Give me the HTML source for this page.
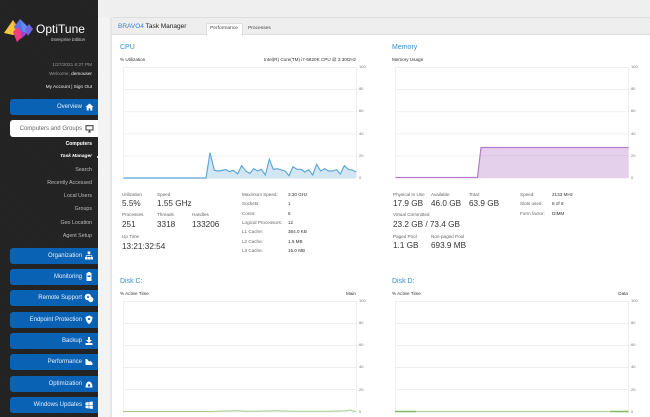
<!DOCTYPE html>
<html><head><meta charset="utf-8"><style>
html,body{margin:0;padding:0}
body{width:650px;height:417px;overflow:hidden;position:relative;background:#f3f3f3;font-family:"Liberation Sans",sans-serif}
#w{position:absolute;left:0;top:0;width:650px;height:417px;overflow:hidden;filter:blur(.3px)}
.t{position:absolute;white-space:nowrap;line-height:10px;height:10px}
.s{font-size:4.6px;color:#666}
.k{font-size:4.6px;color:#333}
.v{font-size:8.2px;color:#333}
.h{font-size:7px;color:#3a8fc9}
.m{font-size:5.3px;color:#ddd;right:558px;text-align:right}
.i{font-size:4.7px;color:#ddd;right:558px;text-align:right}
.b{position:absolute;left:10px;width:88px;height:16px;background:#0a62b5;border-radius:3px 0 0 3px}
.bt{position:absolute;right:568px;color:#e8f0fa;font-size:6px;line-height:10px;white-space:nowrap;text-align:right}
.y{font-size:4px;color:#777;position:absolute;line-height:6px}
</style></head><body><div id="w">
<div style="position:absolute;left:0;top:0;width:98px;height:417px;background-color:#212121;background-image:repeating-linear-gradient(45deg,rgba(255,255,255,.025) 0 1px,transparent 1px 2px)"></div>
<div style="position:absolute;left:98px;top:0;width:552px;height:17px;background:#efefef"></div>
<div style="position:absolute;left:110px;top:17px;width:2px;height:400px;background:#e6e6e6"></div>
<div style="position:absolute;left:112px;top:17px;width:538px;height:400px;background:#fff"></div>
<div style="position:absolute;left:112px;top:17px;width:538px;height:18px;background:#eeeeee;border-top:1px solid #ddd;box-sizing:border-box;border-radius:2px 0 0 0;border-bottom:1px solid #ddd"></div>
<div style="position:absolute;left:206px;top:23px;width:37px;height:13px;background:#fff;border:1px solid #ddd;border-bottom:none;box-sizing:border-box;border-radius:2px 2px 0 0"></div>

<svg style="position:absolute;left:0;top:0" width="650" height="417" viewBox="0 0 650 417">
<g>
<polygon points="4,33 13,20 21,33 13,35" fill="#f7c63c"/>
<polygon points="13,20 18,27 21,34 15,36" fill="#f9a13a"/>
<polygon points="14,27 20,19 26,33 21,37" fill="#5a6fe8"/>
<polygon points="20,19 24,23 31,30 27,33 24,36" fill="#5b8df0"/>
<polygon points="25,29 29,24 33,29 28,36" fill="#6f63e0"/>
<polygon points="13,32 17,42 23,34 18,27" fill="#ef3e7d"/>
<polygon points="18,31 23,36 17,42 15,36" fill="#f0398a"/>
<polygon points="21,31 27,33 21,39" fill="#a93ad0"/>
</g>
<g fill="none" stroke="#efefef" stroke-width="1">
<path d="M123.5 67.5H356.5V178H123.5Z M123.5 89.5H356.5 M123.5 111.7H356.5 M123.5 133.8H356.5 M123.5 156H356.5"/>
<path d="M395.5 67.5H628.5V178H395.5Z M395.5 89.500H628.500 M395.500 111.700H628.500 M395.500 133.800H628.500 M395.500 156H628.500"/>
<path d="M123.500 301.500H356.500V412H123.500Z M123.500 323.500H356.500 M123.500 345.500H356.500 M123.500 367.500H356.500 M123.500 389.500H356.500"/>
<path d="M395.500 301.500H628.500V412H395.500Z M395.500 323.500H628.500 M395.500 345.500H628.500 M395.500 367.500H628.500 M395.500 389.500H628.500"/>
</g>
<g transform="translate(110 110) scale(.33333)">
<path d="M40 206V204H288L300 128L313 181L325 183L348 179L358 185L370 181L383 192L395 167L408 184L420 190L431 176L442 183L454 178L466 195L478 148L490 178L502 176L525 183L537 197L549 170L561 178L573 178L585 186L596 179L608 195L620 163L632 183L644 176L656 183L668 183L680 179L691 192L703 167L715 178L727 180L738 186V206Z" fill="#d3e6f3"/>
<path d="M40 204H288L300 128L313 181L325 183L348 179L358 185L370 181L383 192L395 167L408 184L420 190L431 176L442 183L454 178L466 195L478 148L490 178L502 176L525 183L537 197L549 170L561 178L573 178L585 186L596 179L608 195L620 163L632 183L644 176L656 183L668 183L680 179L691 192L703 167L715 178L727 180L738 186" fill="none" stroke="#5ba7d6" stroke-width="3.5"/>
</g>
<path d="M481 147.500H628.500V178H477.500Z" fill="#e5d0ec"/>
<path d="M395.500 177.500H477.500L481 147.500H628.500" fill="none" stroke="#b87ccf" stroke-width="1.2"/>
<path d="M481 155.800H628.500" stroke="#dcc5e4" stroke-width="1"/>
<path d="M123 411.500H210L225 411L235 410.800L248 411.300L275 410.700L290 411.300L330 411.200L346 410.800L350 410L355 411.500H356" fill="none" stroke="#a6cf8d" stroke-width="1"/>
<path d="M395 411.500H416" stroke="#85bb66" stroke-width="1.500"/>
<path d="M416 411.500H610" stroke="#b5d8a1" stroke-width="1.200"/>
<path d="M610 411.500H628.500" stroke="#85bb66" stroke-width="1.500"/>
</svg>

<div class="t" style="left:36px;top:23px;height:13px;line-height:13px;font-size:12px;color:#fff">OptiTune</div>
<div class="t" style="right:565px;top:35px;font-size:4.3px;font-style:italic;color:#ccc">Enterprise Edition</div>
<div class="t i" style="top:60px;color:#999">1/27/2021 6:27 PM</div>
<div class="t i" style="top:69px;color:#999">Welcome, <span style="color:#eee">demouser</span></div>
<div class="t i" style="top:82px;color:#eee">My Account | Sign Out</div>

<div class="b" style="top:99px"></div>
<div class="bt" style="top:102px">Overview</div>
<svg style="position:absolute;left:85px;top:103px" width="9" height="8" viewBox="0 0 9 8"><path d="M4.5 0.5L0.5 4H1.7V7.5H3.7V5.2H5.3V7.5H7.3V4H8.5Z" fill="#fff"/></svg>
<div style="position:absolute;left:10px;top:120px;width:88px;height:17px;background:#fff;border-radius:3px 0 0 3px"></div>
<div class="bt" style="top:124px;color:#666">Computers and Groups</div>
<svg style="position:absolute;left:85px;top:125px" width="9" height="8" viewBox="0 0 9 8"><path d="M1 .7H8V5H1Z M3 7H6M4.500 5V7" fill="none" stroke="#444" stroke-width="1.100"/></svg>

<div class="t m" style="top:139px;color:#fff;font-weight:bold;font-size:5px">Computers</div>
<div class="t m" style="top:152px;color:#fff;font-weight:bold;font-style:italic;font-size:4.800px">Task Manager</div>
<div style="position:absolute;left:97px;top:156px;width:2px;height:2px;border-radius:50%;background:#fff"></div>
<div class="t m" style="top:165px;color:#bbb">Search</div>
<div class="t m" style="top:178px;color:#bbb">Recently Accessed</div>
<div class="t m" style="top:191px;color:#bbb">Local Users</div>
<div class="t m" style="top:204px;color:#bbb">Groups</div>
<div class="t m" style="top:218px;color:#bbb">Geo Location</div>
<div class="t m" style="top:231px;color:#bbb">Agent Setup</div>

<div class="b" style="top:248px"></div><div class="bt" style="top:251px">Organization</div>
<div class="b" style="top:269px"></div><div class="bt" style="top:272px">Monitoring</div>
<div class="b" style="top:290px"></div><div class="bt" style="top:293px">Remote Support</div>
<div class="b" style="top:312px"></div><div class="bt" style="top:315px">Endpoint Protection</div>
<div class="b" style="top:333px"></div><div class="bt" style="top:336px">Backup</div>
<div class="b" style="top:354px"></div><div class="bt" style="top:357px">Performance</div>
<div class="b" style="top:376px"></div><div class="bt" style="top:379px">Optimization</div>
<div class="b" style="top:397px"></div><div class="bt" style="top:400px">Windows Updates</div>
<svg style="position:absolute;left:84px;top:248px" width="10" height="165" viewBox="0 0 10 165">
<g fill="#fff">
<path d="M3.700 3.500H6.300V6H3.700Z M1 9H3.500V11.500H1Z M3.800 9H6.200V11.500H3.800Z M6.500 9H9V11.500H6.500Z"/><path d="M5 6V8M2.200 9V7.700H7.800V9" stroke="#fff" stroke-width=".6" fill="none"/>
<path d="M2.500 25H7.500V33H2.500Z M3.700 24H6.300V25.500H3.700Z"/>
<circle cx="4" cy="49" r="3.300"/><circle cx="6.800" cy="51.500" r="2.600"/>
<path d="M5 67.500L8.500 69C8.500 72 7 75 5 76C3 75 1.500 72 1.500 69Z"/>
<path d="M4 89H6V92H8L5 95L2 92H4Z M1.500 95H8.500V97H1.500Z"/>
<path d="M1.500 111H3L5 113.500L6.500 113L8.500 115V117H1.500Z"/>
<path d="M1.500 139.500C1.500 131.500 8.500 131.500 8.500 139.500Z"/>
<path d="M1.500 154.500L4.700 154V157H1.500Z M5.200 154L8.800 153.500V157H5.200Z M1.500 157.500H4.700V160.500L1.500 160Z M5.200 157.500H8.800V161L5.200 160.500Z"/>
</g>
<g fill="#0a62b5"><circle cx="4" cy="49" r="1"/><circle cx="5" cy="71" r="1.100"/><path d="M3.500 27.500H6.500V29H3.500Z"/><circle cx="5" cy="137.500" r="1.200"/></g>
</svg>

<div class="t" style="left:118px;top:22px;font-size:6.500px;color:#222"><span style="color:#3b7fd4">BRAVO4</span> Task Manager</div>
<div class="t" style="left:210px;top:24px;font-size:4.900px;color:#444">Performance</div>
<div class="t" style="left:248px;top:24px;font-size:4.900px;color:#444">Processes</div>

<div class="t h" style="left:120px;top:43px">CPU</div>
<div class="t k" style="left:120px;top:55px">% Utilization</div>
<div class="t k" style="right:294px;top:55px">Intel(R) Core(TM) i7-5820K CPU @ 3.30GHz</div>
<div class="t h" style="left:392px;top:43px">Memory</div>
<div class="t k" style="left:392px;top:55px">Memory Usage</div>
<div class="t h" style="left:120px;top:277px">Disk C:</div>
<div class="t k" style="left:120px;top:289px">% Active Time</div>
<div class="t k" style="right:294px;top:289px">Main</div>
<div class="t h" style="left:392px;top:277px">Disk D:</div>
<div class="t k" style="left:392px;top:289px">% Active Time</div>
<div class="t k" style="right:22px;top:289px">Data</div>

<div class="y" style="left:359px;top:64px">100</div><div class="y" style="left:359px;top:86px">80</div><div class="y" style="left:359px;top:108px">60</div><div class="y" style="left:359px;top:131px">40</div><div class="y" style="left:359px;top:153px">20</div><div class="y" style="left:359px;top:175px">0</div>
<div class="y" style="left:631px;top:64px">100</div><div class="y" style="left:631px;top:86px">80</div><div class="y" style="left:631px;top:108px">60</div><div class="y" style="left:631px;top:131px">40</div><div class="y" style="left:631px;top:153px">20</div><div class="y" style="left:631px;top:175px">0</div>
<div class="y" style="left:359px;top:298px">100</div><div class="y" style="left:359px;top:320px">80</div><div class="y" style="left:359px;top:342px">60</div><div class="y" style="left:359px;top:364px">40</div><div class="y" style="left:359px;top:387px">20</div><div class="y" style="left:359px;top:409px">0</div>
<div class="y" style="left:631px;top:298px">100</div><div class="y" style="left:631px;top:320px">80</div><div class="y" style="left:631px;top:342px">60</div><div class="y" style="left:631px;top:364px">40</div><div class="y" style="left:631px;top:387px">20</div><div class="y" style="left:631px;top:409px">0</div>

<div class="t s" style="left:122px;top:190px">Utilization</div><div class="t s" style="left:157px;top:190px">Speed</div>
<div class="t v" style="left:122px;top:199px">5.5%</div><div class="t v" style="left:157px;top:199px">1.55 GHz</div>
<div class="t s" style="left:122px;top:210px">Processes</div><div class="t s" style="left:157px;top:210px">Threads</div><div class="t s" style="left:192px;top:210px">Handles</div>
<div class="t v" style="left:122px;top:220px">251</div><div class="t v" style="left:157px;top:220px">3318</div><div class="t v" style="left:192px;top:220px">133206</div>
<div class="t s" style="left:122px;top:232px">Up Time</div>
<div class="t v" style="left:122px;top:242px">13:21:32:54</div>

<div class="t s" style="left:242px;top:190px">Maximum Speed:</div><div class="t k" style="left:288px;top:190px">3.30 GHz</div>
<div class="t s" style="left:242px;top:199px">Sockets:</div><div class="t k" style="left:288px;top:199px">1</div>
<div class="t s" style="left:242px;top:209px">Cores:</div><div class="t k" style="left:288px;top:209px">6</div>
<div class="t s" style="left:242px;top:218px">Logical Processors:</div><div class="t k" style="left:288px;top:218px">12</div>
<div class="t s" style="left:242px;top:227px">L1 Cache:</div><div class="t k" style="left:288px;top:227px">384.0 KB</div>
<div class="t s" style="left:242px;top:237px">L2 Cache:</div><div class="t k" style="left:288px;top:237px">1.5 MB</div>
<div class="t s" style="left:242px;top:246px">L3 Cache:</div><div class="t k" style="left:288px;top:246px">15.0 MB</div>

<div class="t s" style="left:393px;top:190px">Physical In Use</div><div class="t s" style="left:431px;top:190px">Available</div><div class="t s" style="left:469px;top:190px">Total:</div>
<div class="t v" style="left:393px;top:199px">17.9 GB</div><div class="t v" style="left:431px;top:199px">46.0 GB</div><div class="t v" style="left:469px;top:199px">63.9 GB</div>
<div class="t s" style="left:393px;top:210px">Virtual Committed</div>
<div class="t v" style="left:393px;top:220px">23.2 GB / 73.4 GB</div>
<div class="t s" style="left:393px;top:232px">Paged Pool</div><div class="t s" style="left:431px;top:232px">Non-paged Pool</div>
<div class="t v" style="left:393px;top:241px">1.1 GB</div><div class="t v" style="left:431px;top:241px">693.9 MB</div>

<div class="t s" style="left:520px;top:190px">Speed:</div><div class="t k" style="left:552px;top:190px">2133 MHz</div>
<div class="t s" style="left:520px;top:199px">Slots used:</div><div class="t k" style="left:552px;top:199px">8 of 8</div>
<div class="t s" style="left:520px;top:209px">Form factor:</div><div class="t k" style="left:552px;top:209px">DIMM</div>
</div></body></html>
